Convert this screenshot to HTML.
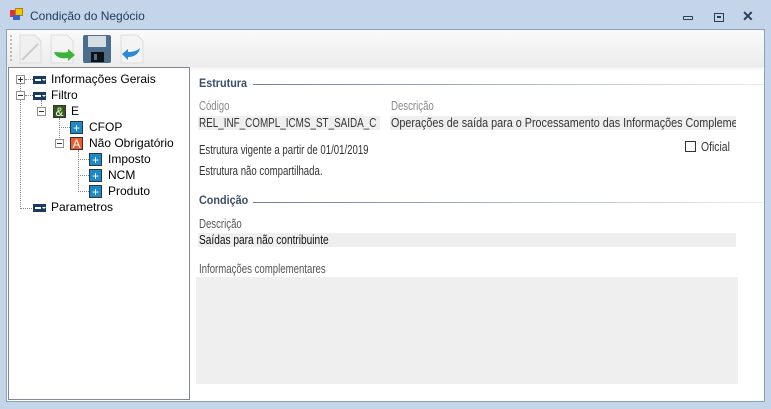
<!DOCTYPE html><html><head><meta charset="utf-8"><style>
*{margin:0;padding:0;box-sizing:border-box}
body{width:771px;height:409px;background:#c4d5ea;font-family:"Liberation Sans",sans-serif;font-size:12px;position:relative;overflow:hidden;color:#000}
.a{position:absolute}
.n{display:inline-block;font-size:13px;transform:scaleX(.74);transform-origin:left center;white-space:nowrap}
.title{left:30px;top:9px;font-size:12px;color:#1e395b}
.client{left:6px;top:29px;width:759px;height:373px;background:#fff;border:1px solid #8aa0bd}
.tb{left:7px;top:30px;width:757px;height:37px;background:linear-gradient(#fafafa,#ececec)}
.tree{left:8px;top:67px;width:182px;height:333px;background:#fff;border:1px solid #828790}
.t{position:absolute;font-size:12px;white-space:nowrap}
.exp{position:absolute;width:9px;height:9px;border:1px solid #919191;background:#fff}
.exp:before{content:"";position:absolute;left:1px;top:3px;width:5px;height:1px;background:#333}
.exp.p:after{content:"";position:absolute;left:3px;top:1px;width:1px;height:5px;background:#333}
.ic{position:absolute;width:13px;height:8px;background:#1a3a66;border:1px solid #1a3a66}
.ic:before{content:"";position:absolute;left:1px;top:2px;width:6px;height:2px;background:#fff}
.ic:after{content:"";position:absolute;left:8px;top:2px;border:2px solid transparent;border-top:2px solid #fff}
.sq{position:absolute;width:13px;height:13px;color:#fff;font-size:12px;line-height:12px;text-align:center;border:1px solid #333}
.dv{position:absolute;border-left:1px dotted #888}
.dh{position:absolute;border-top:1px dotted #888}
.lbl{color:#8a8a8a;font-size:12px}
.fld{background:#efefef;height:14px;font-size:12px;color:#333;line-height:14px;padding-left:1px;overflow:hidden;white-space:nowrap}
.hd{font-weight:bold;color:#3b4d6b;font-size:12px}
.line{height:1px;background:linear-gradient(90deg,#6c7f9c,#e8ecf2)}
</style></head><body>
<div class="a" style="left:10px;top:10px;width:7px;height:7px;background:#d33;"></div>
<div class="a" style="left:15px;top:8px;width:8px;height:8px;background:#f5c400;border:1px solid #a80"></div>
<div class="a" style="left:13px;top:15px;width:7px;height:5px;background:#36c"></div>
<div class="a title">Condição do Negócio</div>
<div class="a" style="left:683px;top:16px;width:10px;height:4px;border:1px solid #2c3e5a;border-radius:1px"></div>
<div class="a" style="left:714px;top:13px;width:10px;height:9px;border:1px solid #2c3e5a"><div style="margin:2px 2px;width:4px;height:2px;border:1px solid #2c3e5a"></div></div>
<div class="a" style="left:742px;top:8px;font-size:14px;color:#2c3e5a;font-weight:bold">✕</div>
<div class="a client"></div>
<div class="a tb"></div>
<div class="a" style="left:10px;top:35px;height:26px;border-left:2px dotted #bbb"></div>
<svg class="a" style="left:18px;top:34px" width="130" height="30">
<path d="M2 1h15l6 6v22H2z" fill="#f0f0f0" stroke="#ddd"/><path d="M4 26L20 10" stroke="#ccc" stroke-width="2"/>
<path d="M33 1h16l6 6v22H33z" fill="#f4f4f4" stroke="#ddd"/><path d="M36 18c2 6 8 7 14 6v3l7-6-7-6v3c-5 1-9 0-14 0z" fill="#3cb43c"/>
<rect x="65" y="1" width="28" height="28" rx="2" fill="#4d6d8c"/><rect x="70" y="2" width="18" height="11" fill="#d4dce4"/><rect x="73" y="18" width="13" height="10" fill="#111"/><rect x="76" y="20" width="3" height="6" fill="#4d6d8c"/>
<path d="M103 1h16l6 6v22h-22z" fill="#f4f4f4" stroke="#ddd"/><path d="M122 14c-1 6-6 9-12 9v3l-6-6 6-5v3c5 0 9-1 12-4z" fill="#2a8ad8"/>
</svg>
<div class="a tree">
<div class="dv" style="left:11px;top:11px;height:130px"></div>
<div class="dh" style="left:11px;top:140px;width:12px"></div>
<div class="dh" style="left:16px;top:11px;width:8px"></div>
<div class="dh" style="left:16px;top:27px;width:8px"></div>
<div class="exp p" style="left:7px;top:7px"></div><div class="ic" style="left:24px;top:8px"></div><div class="t" style="left:42px;top:4px">Informações Gerais</div>
<div class="exp" style="left:7px;top:23px"></div><div class="ic" style="left:24px;top:24px"></div><div class="t" style="left:42px;top:20px">Filtro</div>
<div class="dv" style="left:32px;top:32px;height:8px"></div>
<div class="exp" style="left:28px;top:39px"></div><div class="sq" style="left:44px;top:37px;background:#2f5a12">&amp;</div><div class="t" style="left:62px;top:36px">E</div>
<div class="dv" style="left:50px;top:50px;height:26px"></div>
<div class="dh" style="left:50px;top:59px;width:11px"></div>
<div class="sq" style="left:61px;top:53px;background:#1a8ac8">+</div><div class="t" style="left:80px;top:52px">CFOP</div>
<div class="exp" style="left:46px;top:71px"></div><div class="sq" style="left:61px;top:69px;background:#f05a28">A</div><div class="t" style="left:80px;top:68px">Não Obrigatório</div>
<div class="dv" style="left:69px;top:82px;height:42px"></div>
<div class="dh" style="left:69px;top:91px;width:11px"></div><div class="dh" style="left:69px;top:107px;width:11px"></div><div class="dh" style="left:69px;top:123px;width:11px"></div>
<div class="sq" style="left:80px;top:85px;background:#1a8ac8">+</div><div class="t" style="left:99px;top:84px">Imposto</div>
<div class="sq" style="left:80px;top:101px;background:#1a8ac8">+</div><div class="t" style="left:99px;top:100px">NCM</div>
<div class="sq" style="left:80px;top:117px;background:#1a8ac8">+</div><div class="t" style="left:99px;top:116px">Produto</div>
<div class="ic" style="left:24px;top:136px"></div><div class="t" style="left:42px;top:132px">Parametros</div>
</div>
<div class="a" style="left:191px;top:67px;width:572px;height:4px;background:linear-gradient(#f0f0f0,#fff)"></div>
<div class="a hd" style="left:199px;top:76px"><span style="display:inline-block;transform:scaleX(.9);transform-origin:left">Estrutura</span></div>
<div class="a line" style="left:253px;top:84px;width:511px"></div>
<div class="a lbl" style="left:199px;top:98px"><span class="n">Código</span></div>
<div class="a lbl" style="left:391px;top:98px"><span class="n">Descrição</span></div>
<div class="a fld" style="left:198px;top:116px;width:182px"><span class="n" style="transform:scaleX(.76)">REL_INF_COMPL_ICMS_ST_SAIDA_C</span></div>
<div class="a fld" style="left:390px;top:116px;width:346px"><span class="n" style="transform:scaleX(.83)">Operações de saída para o Processamento das Informações Complemen</span></div>
<div class="a" style="left:199px;top:142px;color:#333"><span class="n">Estrutura vigente a partir de 01/01/2019</span></div>
<div class="a" style="left:685px;top:141px;width:11px;height:11px;border:1px solid #333;background:#fff"></div>
<div class="a" style="left:701px;top:139px;color:#333"><span class="n" style="transform:scaleX(.8)">Oficial</span></div>
<div class="a" style="left:199px;top:163px;color:#333"><span class="n">Estrutura não compartilhada.</span></div>
<div class="a hd" style="left:199px;top:193px"><span style="display:inline-block;transform:scaleX(.9);transform-origin:left">Condição</span></div>
<div class="a line" style="left:253px;top:202px;width:511px"></div>
<div class="a lbl" style="left:199px;top:216px;color:#555"><span class="n">Descrição</span></div>
<div class="a fld" style="left:198px;top:233px;width:538px;color:#111"><span class="n" style="transform:scaleX(.78)">Saídas para não contribuinte</span></div>
<div class="a lbl" style="left:199px;top:261px;color:#555"><span class="n">Informações complementares</span></div>
<div class="a" style="left:196px;top:277px;width:542px;height:107px;background:#efefef"></div>
</body></html>
